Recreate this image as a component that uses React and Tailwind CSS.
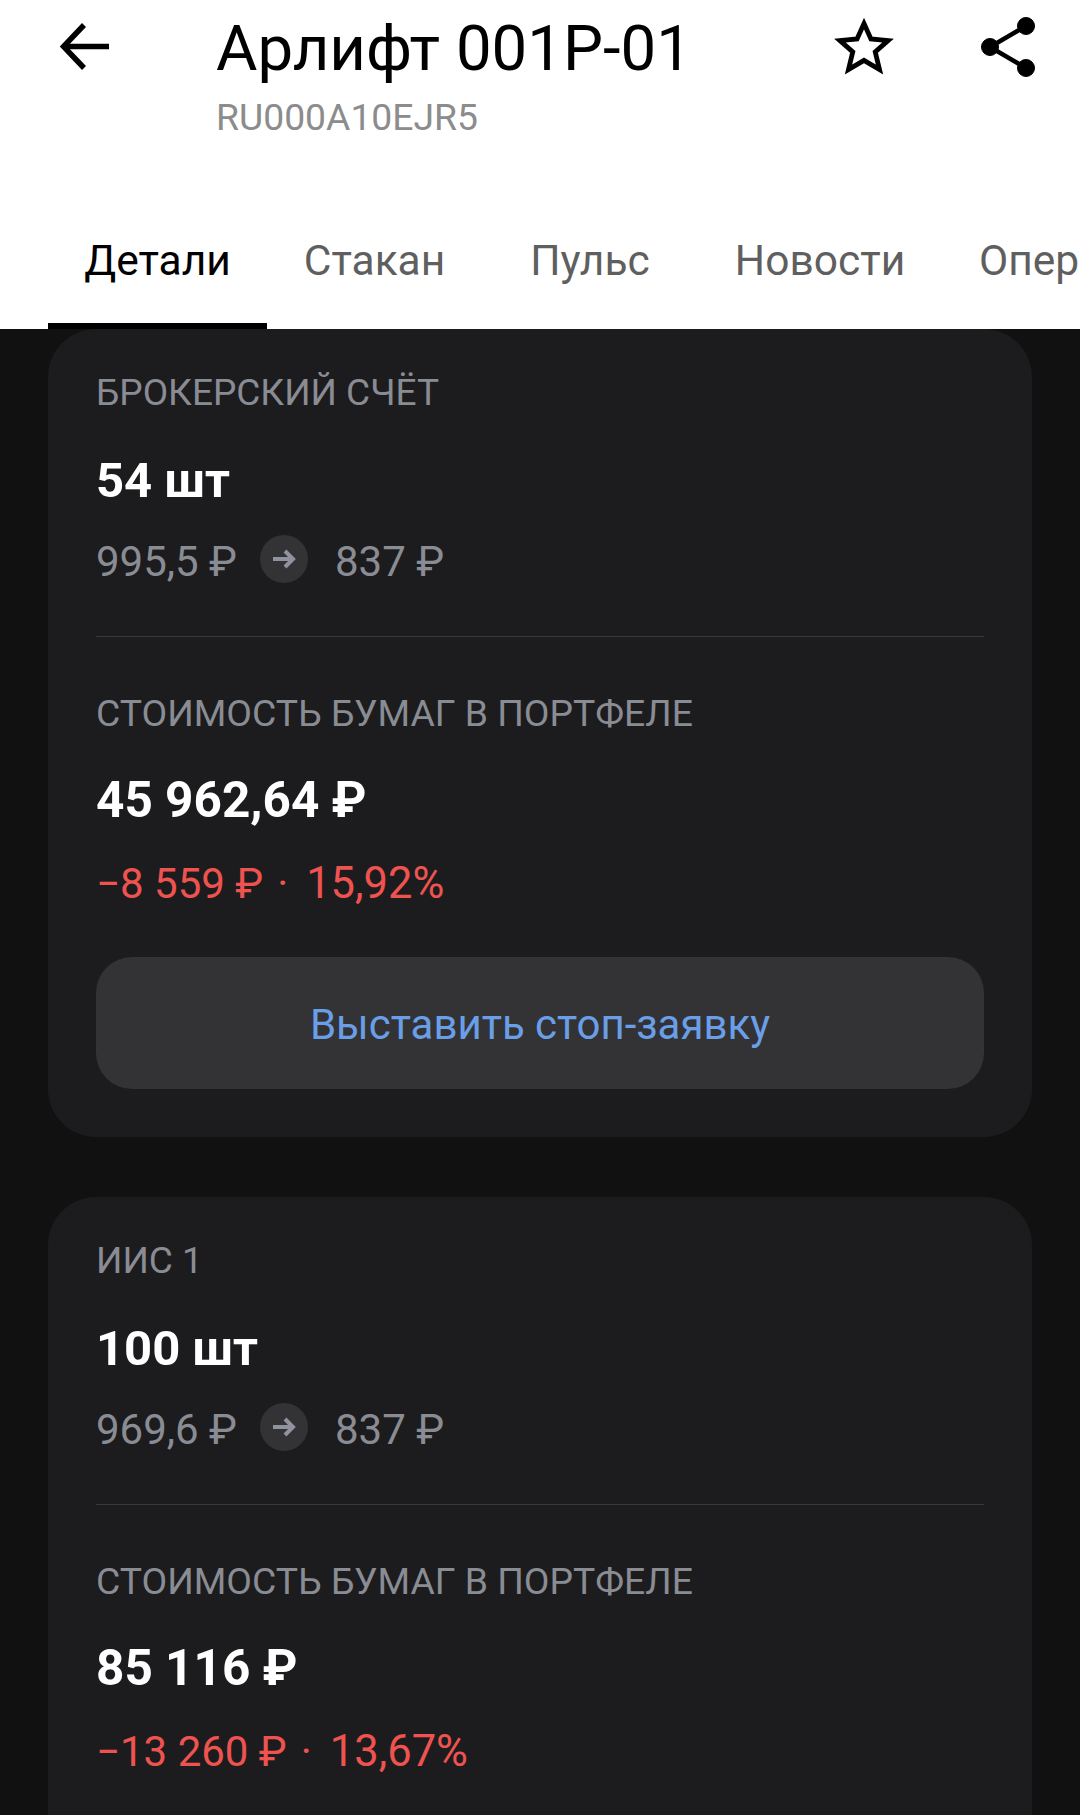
import React from 'react';

const tabs = [
    { label: 'Детали', width: 'w-[219px]', active: true },
    { label: 'Стакан', width: 'w-[215px]' },
    { label: 'Пульс', width: 'w-[216px]' },
    { label: 'Новости', width: 'w-[244px]' },
];

const accounts = [
    {
        name: 'БРОКЕРСКИЙ СЧЁТ',
        count: '54 шт',
        buy: '995,5 ₽',
        now: '837 ₽',
        total: '45 962,64 ₽',
        loss: '−8 559 ₽',
        percent: '15,92%',
    },
    {
        name: 'ИИС 1',
        count: '100 шт',
        buy: '969,6 ₽',
        now: '837 ₽',
        total: '85 116 ₽',
        loss: '−13 260 ₽',
        percent: '13,67%',
    },
];

const BackIcon = () => (
    <svg width="49" height="47" viewBox="0 0 49 47" fill="none" stroke="#000" strokeWidth="5.5">
        <path d="M49 23.5H4" />
        <path d="M24 2L3.5 23.5L24 45" />
    </svg>
);

const StarIcon = () => (
    <svg width="62" height="61" viewBox="0 0 58 57" fill="none" stroke="#000" strokeWidth="4.5">
        <path d="M29 7L35.5 21.5L51.5 23L39.5 33.5L43.5 50L29 41.5L14.500 50L18.500 33.500L6.500 23L22.500 21.500Z" />
    </svg>
);

const ShareIcon = () => (
    <svg width="56" height="60" viewBox="0 0 56 60" fill="#000" stroke="#000">
        <path d="M46 9L10 30L46 51" fill="none" strokeWidth="4.500" />
        <circle cx="46" cy="9" r="8.500" />
        <circle cx="10" cy="30" r="8.500" />
        <circle cx="46" cy="51" r="8.500" />
    </svg>
);

const SmallArrow = () => (
    <svg width="24" height="20" viewBox="0 0 24 20" fill="none" stroke="#9092a0" strokeWidth="4">
        <path d="M1 10H21" />
        <path d="M13 2L21 10L13 18" />
    </svg>
);

const AccountCard = ({ account }) => (
    <div className="bg-[#1c1c1e] rounded-[48px] px-[48px] pb-[48px]">
        <div className="h-[124px] pt-[38px] text-[37px] leading-[52px] text-[#8a8c94]">{account.name}</div>
        <div className="h-[66px] pt-[1px] text-[49px] leading-[54px] font-bold text-white">{account.count}</div>
        <div className="h-[117px] pt-[19px] flex items-start text-[42px] leading-[48px] text-[#8a8c94]">
            <span>{account.buy}</span>
            <span className="-mt-[3px] ml-[23px] mr-[27px] w-[48px] h-[48px] rounded-full bg-[#333336] flex items-center justify-center">
                <SmallArrow />
            </span>
            <span>{account.now}</span>
        </div>
        <div className="h-[1px] bg-[#39393c]" />
        <div className="h-[124px] pt-[50px] text-[37.3px] leading-[52px] text-[#8a8c94]">СТОИМОСТЬ БУМАГ В ПОРТФЕЛЕ</div>
        <div className="h-[97px] pt-[12px] text-[49.5px] leading-[54px] font-bold text-white">{account.total}</div>
        <div className="flex h-[99px] pt-[2px] text-[42px] leading-[48px] text-[#ee5350]">
            <span>{account.loss}</span>
            <span className="ml-[14px] mr-[18px]">·</span>
            <span className="text-[43.5px]">{account.percent}</span>
        </div>
        <button className="w-full h-[132px] pt-[2px] rounded-[36px] bg-[#333336] text-[42px] text-[#6a9fe8]">
            Выставить стоп-заявку
        </button>
    </div>
);

const App = () => {
    return (
        <div className="w-[1080px] h-[1815px] overflow-hidden bg-[#111112] font-['Roboto',sans-serif]">
            <header className="bg-white h-[329px]">
                <div className="h-[194px] flex items-start">
                    <div className="ml-[60px] mt-[23px]">
                        <BackIcon />
                    </div>
                    <div className="ml-[107px] flex-1">
                        <div className="text-[63.5px] leading-[66px] mt-[16px] text-black">Арлифт 001Р-01</div>
                        <div className="text-[37.3px] leading-[44px] mt-[13px] text-[#8c8c8c]">RU000A10EJR5</div>
                    </div>
                    <div className="mt-[16px]">
                        <StarIcon />
                    </div>
                    <div className="mt-[17px] ml-[85px] mr-[44px]">
                        <ShareIcon />
                    </div>
                </div>
                <div className="flex h-[135px] ml-[48px] overflow-hidden">
                    {tabs.map((tab) => (
                        <div
                            key={tab.label}
                            className={
                                tab.active
                                    ? 'shrink-0 flex items-center justify-center text-[42.5px] text-black border-b-[6px] border-black pt-[4px] ' + tab.width
                                    : 'shrink-0 flex items-center justify-center text-[42.5px] text-[#5f5f5f] pb-[2px] ' + tab.width
                            }
                        >
                            {tab.label}
                        </div>
                    ))}
                    <div className="shrink-0 w-[138px] pl-[37px] flex items-center overflow-hidden whitespace-nowrap text-[42.5px] text-[#5f5f5f] pb-[2px]">
                        Опер
                    </div>
                </div>
            </header>
            <main className="px-[48px] flex flex-col gap-[60px]">
                {accounts.map((account) => (
                    <AccountCard key={account.name} account={account} />
                ))}
            </main>
        </div>
    );
};

export default App;
